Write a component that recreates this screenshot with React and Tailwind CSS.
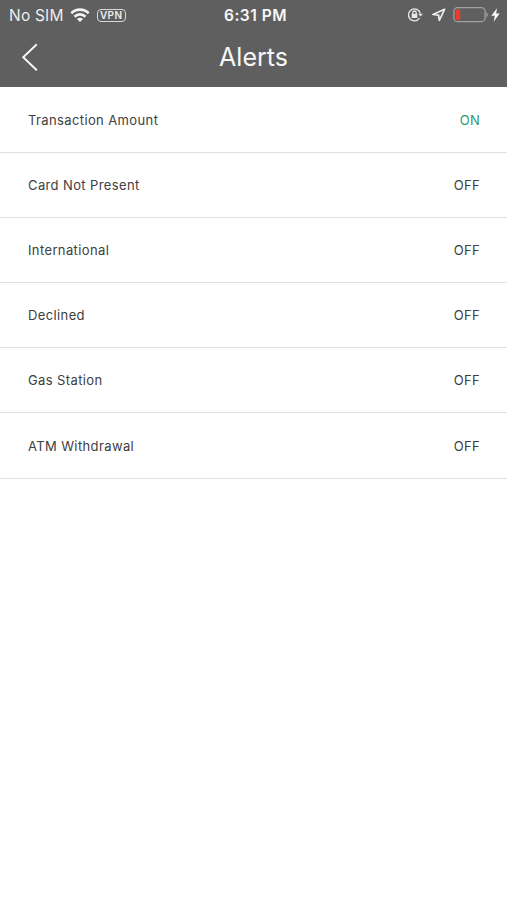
const alerts = [
  { name: 'Transaction Amount', on: true },
  { name: 'Card Not Present', on: false },
  { name: 'International', on: false },
  { name: 'Declined', on: false },
  { name: 'Gas Station', on: false },
  { name: 'ATM Withdrawal', on: false },
];

function WifiIcon() {
  return (
    <svg className="ml-[6px] h-[15px] w-5 shrink-0" viewBox="0 0 20 15" fill="none" stroke="#f4f4f4" strokeWidth="2.7">
      <path d="M1.3 5.2C6.2.5 13.8.5 18.7 5.2" />
      <path d="M4.5 8.7C7.6 5.7 12.4 5.7 15.5 8.7" />
      <path d="M10 14 6.9 11C8.7 9.4 11.3 9.4 13.1 11Z" fill="#f4f4f4" stroke="none" />
    </svg>
  );
}

function RotationLockIcon() {
  return (
    <svg className="h-4 w-4" viewBox="0 0 16 16" fill="none" stroke="#e8e8e8" strokeWidth="1.3">
      <path d="M12.5 11.2A6 6 0 1 1 13.3 6.5" />
      <path d="M11.2 6.7H15.8L13.6 9.6Z" fill="#e8e8e8" stroke="none" />
      <rect x="4.7" y="6.8" width="5.6" height="4.3" rx=".5" fill="#e8e8e8" stroke="none" />
      <path d="M5.8 7.1V5.7a1.7 1.7 0 0 1 3.4 0V7.1" />
    </svg>
  );
}

function LocationIcon() {
  return (
    <svg className="ml-[9px] h-[14px] w-[14px]" viewBox="0 0 14 14" fill="none" stroke="#efefef" strokeWidth="1.7" strokeLinejoin="round">
      <path d="M12.5 1.3 1 6.5 6.6 7.1 7.3 12.5Z" />
    </svg>
  );
}

function BatteryIcon() {
  return (
    <svg className="ml-[7px] h-4 w-[35px]" viewBox="0 0 35 16" fill="none">
      <rect x=".9" y=".7" width="31.2" height="14" rx="3.8" stroke="#a0a0a0" strokeWidth="1.3" />
      <path d="M4.2 2.5H7.2V12.9H4.2A1.5 1.5 0 0 1 2.7 11.4V4A1.5 1.5 0 0 1 4.2 2.5Z" fill="#f0392f" />
      <path d="M33.4 5.3c2 .8 2 4 0 4.8Z" fill="#a0a0a0" />
    </svg>
  );
}

function BoltIcon() {
  return (
    <svg className="ml-[3px] h-[14px] w-[9px]" viewBox="0 0 9 14" fill="#f8f8f8">
      <path d="M6 .2.3 7.8H3.8L2.6 13.7 8.7 5.5H5.2Z" />
    </svg>
  );
}

export default function App() {
  return (
    <main className="h-[900px] w-[507px] overflow-hidden bg-white font-['Inter','Liberation_Sans',sans-serif]">
      <header className="h-[87px] bg-[#5f5f5f] text-[#f7f7f7]">
        <div className="grid h-[30px] grid-cols-[1fr_auto_1fr] items-center pr-[7px] pl-[9px]">
          <div className="flex items-center">
            <span className="pt-px text-[15.5px] leading-[29px] tracking-[0.2px] whitespace-nowrap text-[#ededed]">No SIM</span>
            <WifiIcon />
            <span className="ml-[7px] flex h-[13px] w-[29px] items-center justify-center rounded-[4px] border border-[#d8d8d8] text-[10px] leading-none font-semibold tracking-[0.4px] text-[#ededed]">VPN</span>
          </div>
          <span className="pt-px pl-[2px] text-[15.5px] leading-[29px] font-semibold tracking-[0.5px]">6:31 PM</span>
          <div className="flex items-center justify-end">
            <RotationLockIcon />
            <LocationIcon />
            <BatteryIcon />
            <BoltIcon />
          </div>
        </div>
        <div className="grid h-[54px] grid-cols-[1fr_auto_1fr] items-center">
          <button aria-label="Back" className="ml-[21px] w-[18px]">
            <svg className="h-7 w-[18px]" viewBox="0 0 18 28" fill="none" stroke="#f8f8f8" strokeWidth="1.9" strokeLinecap="round">
              <path d="M15.3 1.8 2.2 14.3 15.3 26.8" />
            </svg>
          </button>
          <h1 className="text-[25px] leading-[54px] font-normal">Alerts</h1>
        </div>
      </header>
      <ul className="pt-[0.5px]">
        {alerts.map((alert) => (
          <li key={alert.name} className="flex h-[65.2px] items-center justify-between border-b border-[#e0e0e0] pt-[1.5px] pr-[27px] pl-7 text-[13px] text-[#404040]">
            <span className="tracking-[0.38px]">{alert.name}</span>
            <span className={alert.on ? 'tracking-[0.3px] text-[#34956c]' : 'tracking-[0.3px]'}>{alert.on ? 'ON' : 'OFF'}</span>
          </li>
        ))}
      </ul>
    </main>
  );
}
